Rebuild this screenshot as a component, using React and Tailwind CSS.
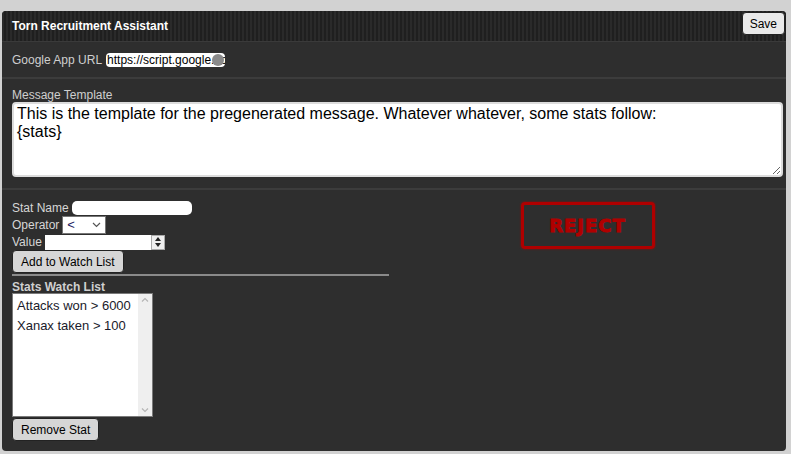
import { useState } from 'react'

export default function App() {
  const [url, setUrl] = useState('https://script.google.com/macros/s/exec')
  const [template, setTemplate] = useState('This is the template for the pregenerated message. Whatever whatever, some stats follow:\n{stats}')
  const [stats] = useState(['Attacks won > 6000', 'Xanax taken > 100'])

  return (
    <div className="w-[791px] h-[454px] bg-[#d2d2d2] pt-[11px] pl-[2px] font-['Liberation_Sans',Arial,sans-serif]">
      <div className="w-[784px] h-[440px] bg-[#2e2e2e] rounded-[4px] overflow-hidden flex flex-col">
        <div className="h-[31px] shrink-0 flex items-center justify-between pl-[10px] pr-[1px] bg-[repeating-linear-gradient(90deg,#2a2a2a_0px,#2a2a2a_2px,#1f1f1f_2px,#1f1f1f_4px)] border-b border-[#3a3a3a]">
          <h1 className="text-[12px] font-bold text-white">Torn Recruitment Assistant</h1>
          <button className="h-[23px] px-[7px] text-[12px] text-black bg-[#e9e9e9] border border-[#222] rounded-[4px] self-start mt-[1px]">Save</button>
        </div>

        <div className="h-[37px] shrink-0 flex items-center pl-[10px] pt-[1px] text-[12px] text-[#cfcfcf] border-b-2 border-[#3c3c3c]">
          <span>Google App URL</span>
          <div className="relative ml-[4px] w-[119px] h-[14px] bg-white rounded-[4px] overflow-hidden">
            <input value={url} onChange={(e) => setUrl(e.target.value)} className="block w-[119px] h-[14px] pl-[1px] text-[12px] leading-[14px] text-black bg-transparent outline-none" />
            <span className="absolute right-[1px] top-[1px] w-[12px] h-[12px] rounded-full bg-[#8a8a8a]" />
          </div>
        </div>

        <div className="h-[111px] shrink-0 pl-[10px] pr-[2px] pt-[10px] border-b-2 border-[#3c3c3c]">
          <label className="block text-[12px] text-[#cfcfcf] leading-[13px]">Message Template</label>
          <textarea value={template} onChange={(e) => setTemplate(e.target.value)} className="block mt-0 w-[771px] h-[75px] px-[3px] py-[1px] text-[16px] leading-[18px] text-black bg-white border-2 border-[#dcdcdc] rounded-[4px] outline-none resize-y font-['Liberation_Sans',Arial,sans-serif]" />
        </div>

        <div className="flex pl-[10px] pt-[9px]">
          <div className="w-[377px] text-[12px] text-[#d6d6d6]">
            <div className="flex items-center h-[17px]">
              <span>Stat Name</span>
              <input className="ml-[3px] w-[120px] h-[14px] bg-white rounded-[5px] outline-none" />
            </div>
            <div className="flex items-center h-[18px]">
              <span>Operator</span>
              <div className="ml-[3px] w-[44px] h-[18px] bg-white border border-[#767676] flex items-center justify-between px-[4px] text-black">
                <span className="text-[13px] text-[#1a1a60]">&lt;</span>
                <svg width="9" height="6" viewBox="0 0 9 6"><path d="M1 1l3.5 3.5L8 1" fill="none" stroke="#555" strokeWidth="1.2" /></svg>
              </div>
            </div>
            <div className="flex items-center h-[16px]">
              <span>Value</span>
              <div className="ml-[3px] w-[120px] h-[15px] bg-white flex justify-end">
                <div className="w-[14px] h-[15px] bg-[#efefef] border border-[#aaa] flex flex-col items-center justify-around">
                  <svg width="6" height="4" viewBox="0 0 6 4"><path d="M0 4L3 0L6 4Z" fill="#222" /></svg>
                  <svg width="6" height="4" viewBox="0 0 6 4"><path d="M0 0L3 4L6 0Z" fill="#222" /></svg>
                </div>
              </div>
            </div>
            <button className="block h-[23px] px-[8px] text-[12px] text-black bg-[#d6d6d6] border border-[#222] rounded-[4px]">Add to Watch List</button>
            <hr className="mt-[1px] mb-[5px] border-0 border-t-2 border-[#8a8a8a]" />
            <div className="font-bold text-[12px] text-[#d0d0d0] leading-[12px]">Stats Watch List</div>
            <div className="w-[141px] h-[124px] bg-white border border-[#7a7a7a] flex">
              <ul className="flex-1 pt-[3px] pl-[4px] text-[13px] text-[#1a1a2a] whitespace-nowrap">
                {stats.map((s) => (
                  <li key={s} className="h-[20px] leading-[18px]">{s}</li>
                ))}
              </ul>
              <div className="w-[14px] bg-[#efefef] flex flex-col justify-between items-center py-[3px]">
                <svg width="8" height="5" viewBox="0 0 8 5"><path d="M1 4.5L4 1.5L7 4.5" fill="none" stroke="#b5b5b5" strokeWidth="1.2" /></svg>
                <svg width="8" height="5" viewBox="0 0 8 5"><path d="M1 0.5L4 3.5L7 0.5" fill="none" stroke="#b5b5b5" strokeWidth="1.2" /></svg>
              </div>
            </div>
            <button className="block mt-[1px] h-[23px] px-[8px] text-[12px] text-black bg-[#d6d6d6] border border-[#222] rounded-[4px]">Remove Stat</button>
          </div>

          <div className="flex-1 flex justify-center pt-[3px]">
            <div className="w-[134px] h-[47px] border-[3px] border-[#b00000] rounded-[4px] flex items-center justify-center shadow-[0_0_2px_#b00000]">
              <span className="text-[18px] font-black text-[#b00000] tracking-[1px] [-webkit-text-stroke:1px_#b00000] font-['DejaVu_Sans',sans-serif]">REJECT</span>
            </div>
          </div>
        </div>
      </div>
    </div>
  )
}
